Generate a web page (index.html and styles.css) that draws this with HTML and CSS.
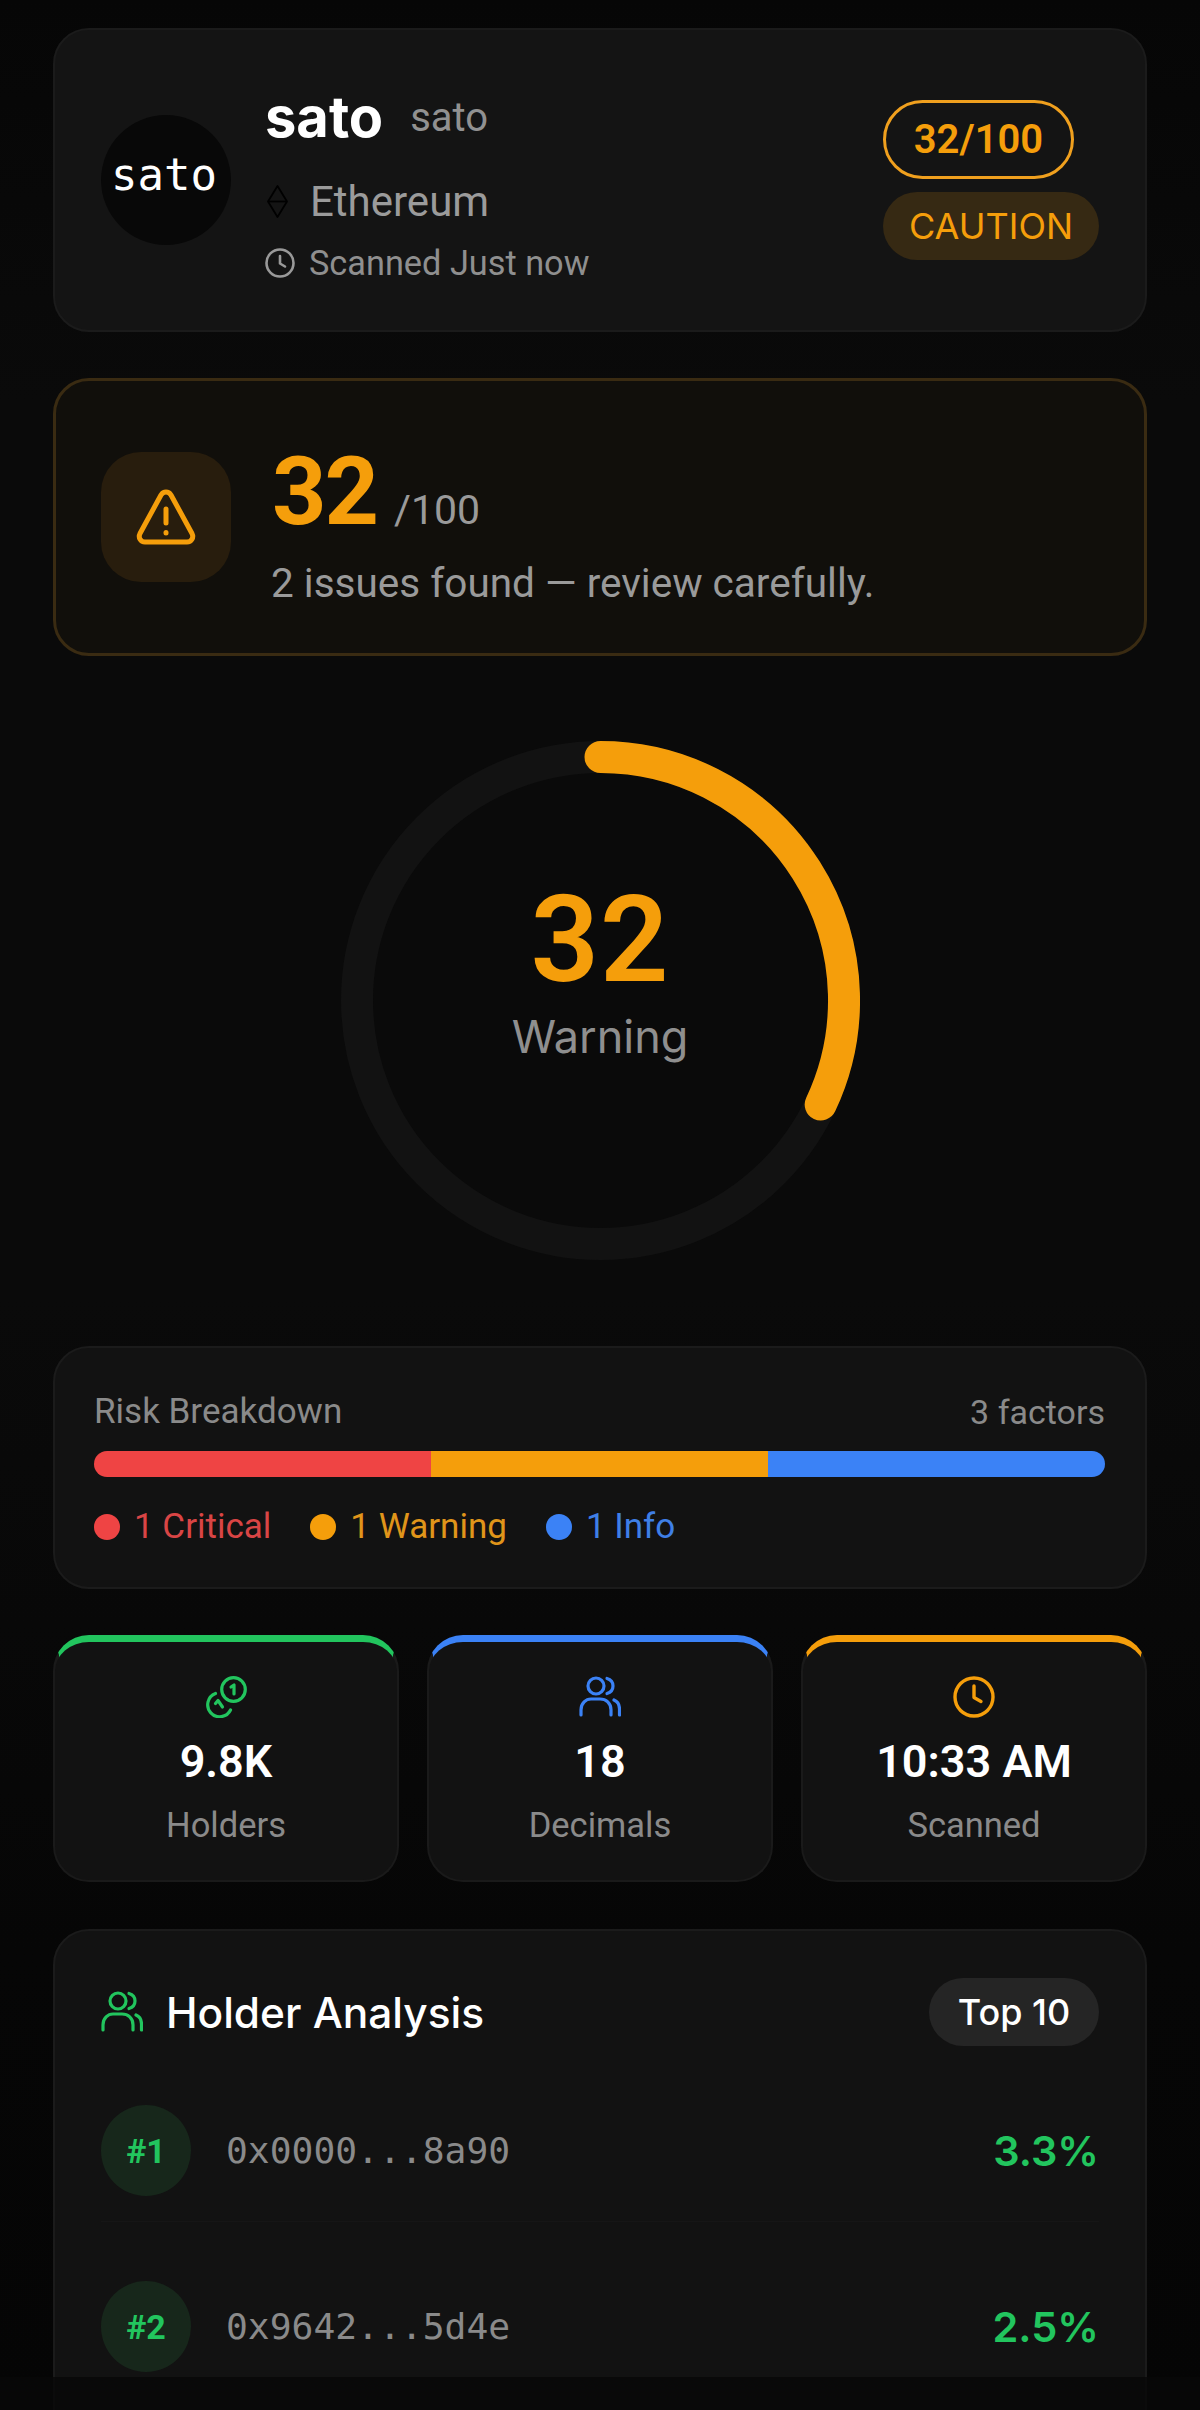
FILE: index.html
```html
<!DOCTYPE html>
<html lang="en">
<head>
<meta charset="utf-8">
<title>sato scan</title>
<link rel="stylesheet" href="styles.css">
</head>
<body>
<main class="page">
  <section class="card head">
    <div class="avatar">sato</div>
    <div class="head-info">
      <div class="name-row"><span class="name">sato</span><span class="symbol">sato</span></div>
      <div class="chain-row">
        <svg class="eth" viewBox="0 0 21 33" fill="none" stroke="#000" stroke-width="1.8" stroke-linejoin="round"><path d="M10.5 1 20 16.5 10.5 32 1 16.5Z"/><path d="M1 16.5H20"/></svg>
        <span>Ethereum</span>
      </div>
      <div class="scan-row">
        <svg class="clock-sm" viewBox="0 0 30 30" fill="none" stroke="#999" stroke-width="2.600" stroke-linecap="round" stroke-linejoin="round"><circle cx="15" cy="15" r="13.500"/><path d="M15 8v7.500l5 3"/></svg>
        <span>Scanned Just now</span>
      </div>
    </div>
    <div class="head-badges">
      <span class="score-pill">32/100</span>
      <span class="caution-pill">CAUTION</span>
    </div>
  </section>

  <section class="alert">
    <div class="alert-icon">
      <svg viewBox="0 0 60 56" width="60" height="56" fill="none" stroke="#f59e0b" stroke-width="5" stroke-linecap="round" stroke-linejoin="round"><path d="M25 6 4 44.500C2 48.500 4.500 53 9 53h42c4.500 0 7-4.500 5-8.500L35 6c-2.500-4-7.500-4-10 0Z"/><path d="M30 20v14"/><path d="M30 43.500v.5"/></svg>
    </div>
    <div class="alert-text">
      <div class="alert-score"><span class="alert-num">32</span><span class="alert-max">/100</span></div>
      <p class="alert-desc">2 issues found — review carefully.</p>
    </div>
  </section>

  <section class="gauge-wrap">
    <div class="gauge">
      <svg viewBox="0 0 519 519" width="519" height="519" fill="none" stroke-width="32">
        <circle cx="259.500" cy="259.500" r="243.500" stroke="#121212"/>
        <path d="M259.500 16A243.500 243.500 0 0 1 479.700 363.500" stroke="#f59e0b" stroke-linecap="round"/>
      </svg>
      <div class="gauge-center">
        <div class="gauge-num">32</div>
        <div class="gauge-label">Warning</div>
      </div>
    </div>
  </section>

  <section class="card risk">
    <div class="risk-top"><span>Risk Breakdown</span><span class="factors">3 factors</span></div>
    <div class="bar"><i class="seg red"></i><i class="seg amber"></i><i class="seg blue"></i></div>
    <div class="legend">
      <span class="leg t-red"><i class="dot red"></i>1 Critical</span>
      <span class="leg t-amber"><i class="dot amber"></i>1 Warning</span>
      <span class="leg t-blue"><i class="dot blue"></i>1 Info</span>
    </div>
  </section>

  <section class="stats">
    <div class="stat s-green">
      <svg class="stat-icon" viewBox="0 0 42 42" fill="none" stroke="#22c55e" stroke-width="3.200" stroke-linecap="round" stroke-linejoin="round"><circle cx="28.500" cy="13.500" r="11.800"/><path d="M10.500 17.500A12 12 0 1 0 25.500 34"/><path d="M26 11l3-2v9"/><path d="M10.500 27.500l2.500-3 4.500 6.500"/></svg>
      <div class="stat-val">9.8K</div>
      <div class="stat-lab">Holders</div>
    </div>
    <div class="stat s-blue">
      <svg class="stat-icon" viewBox="0 0 42 42" fill="none" stroke="#3b82f6" stroke-width="3.200" stroke-linecap="round" stroke-linejoin="round"><circle cx="17" cy="10" r="8"/><path d="M2 39V34C2 27 7 23 12 23H21C27 23 32 27 32 34V39"/><path d="M28 2.500c3.500 1 6 4 6 7.500s-2.500 6.500-6 7.500"/><path d="M35 24c3.500 1.500 5.500 5 5.500 9v6"/></svg>
      <div class="stat-val">18</div>
      <div class="stat-lab">Decimals</div>
    </div>
    <div class="stat s-amber">
      <svg class="stat-icon" viewBox="0 0 42 42" fill="none" stroke="#f59e0b" stroke-width="3.400" stroke-linecap="round" stroke-linejoin="round"><circle cx="21" cy="21" r="19"/><path d="M21 10v11.500l7 4"/></svg>
      <div class="stat-val">10:33 AM</div>
      <div class="stat-lab">Scanned</div>
    </div>
  </section>

  <section class="card holders">
    <div class="holders-head">
      <div class="holders-title">
        <svg class="h-icon" viewBox="0 0 42 42" fill="none" stroke="#22c55e" stroke-width="3.200" stroke-linecap="round" stroke-linejoin="round"><circle cx="17" cy="10" r="8"/><path d="M2 39V34C2 27 7 23 12 23H21C27 23 32 27 32 34V39"/><path d="M28 2.500c3.500 1 6 4 6 7.500s-2.500 6.500-6 7.500"/><path d="M35 24c3.500 1.500 5.500 5 5.500 9v6"/></svg>
        <span>Holder Analysis</span>
      </div>
      <span class="top-pill">Top 10</span>
    </div>
    <div class="row row-first">
      <span class="rank">#1</span><span class="addr">0x0000...8a90</span><span class="pct">3.3%</span>
    </div>
    <div class="row">
      <span class="rank">#2</span><span class="addr">0x9642...5d4e</span><span class="pct">2.5%</span>
    </div>
  </section>
</main>
<div class="bottom-bar"></div>
</body>
</html>
```

FILE: styles.css
```css
* { box-sizing: border-box; margin: 0; padding: 0; }
html, body { height: 2410px; overflow: hidden; background: #0a0a0a; }
body { font-family: "Roboto", "Noto Sans", sans-serif; color: #fff; position: relative; background: linear-gradient(180deg, #060606 0, #0a0a0a 400px, #0a0a0a 1300px, #060606 1950px, #050505 2410px); }
.page { padding: 28px 53px 0; display: flex; flex-direction: column; }

.card { background: #141414; border: 2px solid #1b1b1b; border-radius: 36px; }

.head { height: 304px; display: flex; align-items: center; padding: 0 46px; margin-bottom: 46px; }
.avatar { width: 130px; height: 130px; flex: none; border-radius: 50%; background: #080808; color: #fff; display: flex; align-items: center; justify-content: center; font-family: "DejaVu Sans Mono", monospace; font-size: 44px; line-height: 124px; padding: 0 4px 11px 0; }
.head-info { margin: 8px 0 0 34px; flex: 1; display: flex; flex-direction: column; }
.name-row { display: flex; align-items: center; gap: 27px; height: 56px; margin-top: 4px; }
.name { font-family: "Inter", "Roboto", sans-serif; font-size: 56px; font-weight: 700; line-height: 56px; }
.symbol { font-size: 40px; color: #919191; line-height: 42px; margin-bottom: -2px; }
.chain-row { display: flex; align-items: center; gap: 22px; font-size: 42px; color: #9b9b9b; margin-top: 33px; height: 46px; padding-left: 2px; }
.eth { width: 21px; height: 33px; }
.scan-row { display: flex; align-items: center; gap: 14px; font-size: 34.300px; color: #8f8f8f; margin-top: 19px; height: 40px; }
.clock-sm { width: 30px; height: 30px; }
.head-badges { display: flex; flex-direction: column; align-items: flex-start; gap: 13px; margin-top: -1px; }
.score-pill { width: 191px; height: 79px; border: 3px solid #f0a01e; border-radius: 40px; color: #f59e0b; font-size: 40px; font-weight: 600; display: flex; align-items: center; justify-content: center; }
.caution-pill { width: 216px; height: 68px; border-radius: 34px; background: rgba(245,158,11,.15); color: #f59e0b; font-family: "Inter", "Roboto", sans-serif; font-size: 36px; font-weight: 400; display: flex; align-items: center; justify-content: center; }

.alert { height: 278px; display: flex; align-items: center; padding: 0 45px; background: #110f0b; border: 3px solid #3a2b12; border-radius: 36px; }
.alert-icon { width: 130px; height: 130px; flex: none; border-radius: 40px; background: #281d0d; display: flex; align-items: center; justify-content: center; }
.alert-text { margin-left: 40px; display: flex; flex-direction: column; margin-top: 14px; }
.alert-score { display: flex; align-items: baseline; gap: 17px; padding-left: 1px; }
.alert-num { font-size: 95px; font-weight: 700; color: #f59e0b; line-height: 100px; letter-spacing: -2px; }
.alert-max { font-size: 41px; color: #9a9a9a; }
.alert-desc { font-size: 40.500px; color: #9a9a9a; line-height: 48px; margin-top: 17px; }

.gauge-wrap { display: flex; justify-content: center; padding: 85px 0 86px; }
.gauge { width: 519px; height: 519px; position: relative; }
.gauge svg { display: block; }
.gauge-center { position: absolute; inset: 0; display: flex; flex-direction: column; align-items: center; justify-content: center; }
.gauge-num { font-size: 120px; font-weight: 600; color: #f59e0b; line-height: 120px; margin-top: -57px; letter-spacing: 1px; }
.gauge-label { font-family: "Inter", "Roboto", sans-serif; font-size: 45px; color: #8f8f8f; line-height: 54px; margin-top: 10px; }

.risk { height: 243px; padding: 43px 40px 0 39px; margin-bottom: 46px; background: #121212; }
.risk-top { display: flex; justify-content: space-between; font-size: 35px; color: #8a8a8a; line-height: 42px; }
.factors { font-size: 34px; }
.bar { display: flex; height: 26px; border-radius: 13px; overflow: hidden; margin-top: 18px; }
.seg { flex: 1; }
.red { background: #ef4444; }
.amber { background: #f59e0b; }
.blue { background: #3b82f6; }
.legend { display: flex; gap: 39px; margin-top: 28px; font-size: 35px; line-height: 44px; }
.leg { display: flex; align-items: center; gap: 14px; }
.dot { width: 26px; height: 26px; border-radius: 50%; }
.t-red { color: #d94545; }
.t-amber { color: #e0951a; }
.t-blue { color: #3f7fe6; }

.stats { display: grid; grid-template-columns: repeat(3, 1fr); gap: 28px; margin-bottom: 47px; }
.stat { height: 247px; background: #121212; border: 2px solid #1a1a1a; border-top: 7px solid; border-radius: 36px; display: flex; flex-direction: column; align-items: center; padding-top: 34px; }
.s-green { border-top-color: #22c55e; }
.s-blue { border-top-color: #3b82f6; }
.s-amber { border-top-color: #f59e0b; }
.stat-icon { width: 42px; height: 42px; }
.stat-val { font-size: 45px; font-weight: 600; line-height: 52px; margin-top: 18px; }
.stat-lab { font-size: 34.500px; color: #8a8a8a; line-height: 42px; margin-top: 16px; }

.holders { height: 560px; padding: 47px 46px 0 46px; background: #121212; }
.holders-head { display: flex; justify-content: space-between; align-items: center; height: 68px; }
.holders-title { display: flex; align-items: center; gap: 23px; font-family: "Inter", "Roboto", sans-serif; font-size: 42.400px; font-weight: 500; }
.h-icon { width: 42px; height: 42px; }
.top-pill { width: 170px; height: 68px; border-radius: 34px; background: #252525; font-family: "Inter", "Roboto", sans-serif; font-size: 36px; font-weight: 500; display: flex; align-items: center; justify-content: center; }
.row { display: flex; align-items: center; height: 91px; margin-top: 85px; position: relative; }
.row-first { margin-top: 59px; }
.row-first::after { content: ""; position: absolute; left: 0; right: 0; bottom: -26px; height: 1px; background: #161616; }
.rank { width: 90px; height: 91px; border-radius: 50%; flex: none; background: #17271b; color: #22c55e; font-size: 34px; font-weight: 700; display: flex; align-items: center; justify-content: center; }
.addr { margin-left: 35px; font-family: "DejaVu Sans Mono", monospace; font-size: 36.300px; color: #8a8a8a; flex: 1; }
.pct { font-family: "Inter", "Roboto", sans-serif; font-size: 41.500px; font-weight: 600; color: #22c55e; }

.bottom-bar { position: absolute; left: 0; right: 0; top: 2377px; height: 33px; background: rgba(7,7,7,.8); }
```
